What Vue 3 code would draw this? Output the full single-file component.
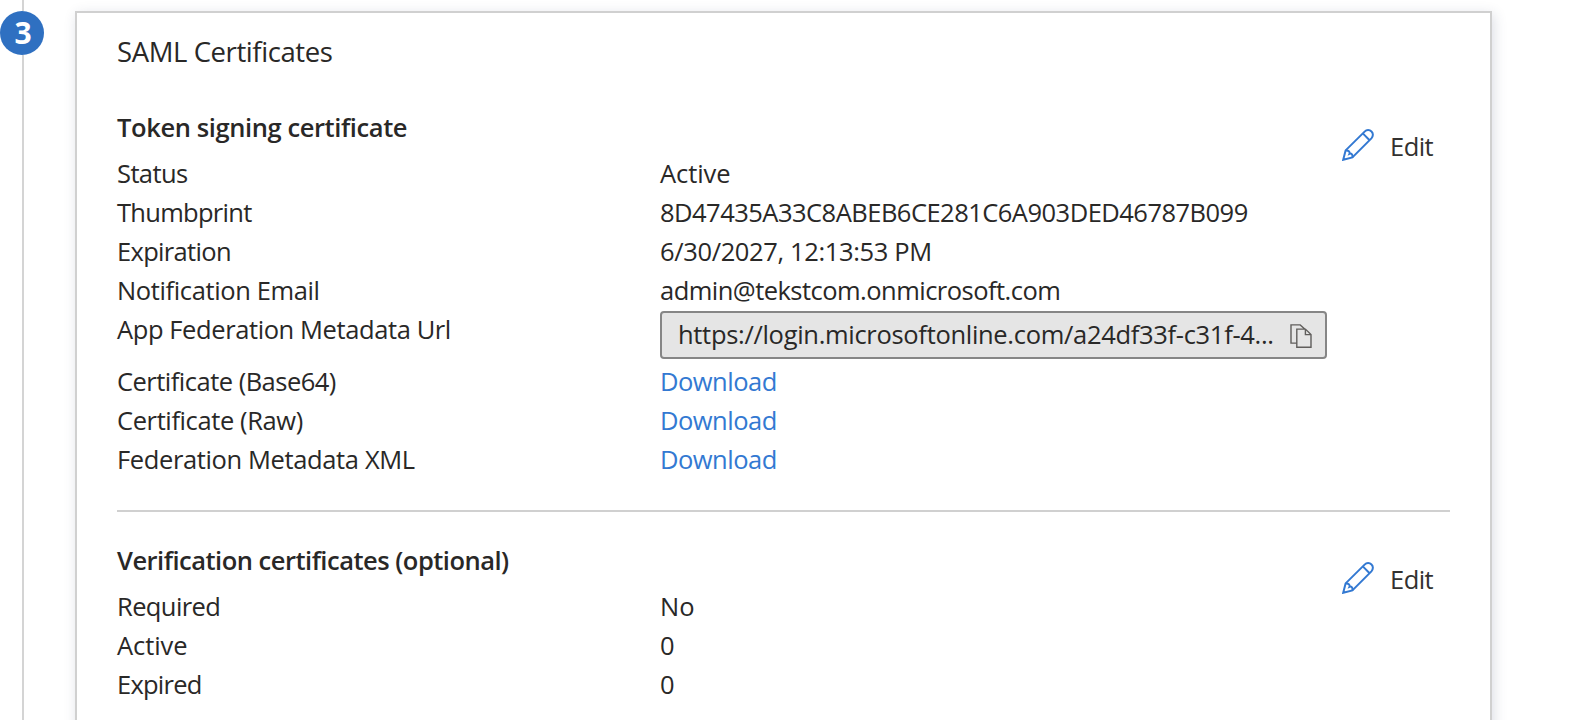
<script setup>
const signing = [
  { label: 'Status', l: 'k-status', value: 'Active', v: 'k-active' },
  { label: 'Thumbprint', l: 'k-thumb', value: '8D47435A33C8ABEB6CE281C6A903DED46787B099', v: 'k-hash' },
  { label: 'Expiration', l: 'k-expiration', value: '6/30/2027, 12:13:53 PM', v: 'k-date' },
  { label: 'Notification Email', l: 'k-email', value: 'admin@tekstcom.onmicrosoft.com', v: 'k-address' },
  { label: 'App Federation Metadata Url', l: 'k-url', value: 'https://login.microsoftonline.com/a24df33f-c31f-4...', field: true },
  { label: 'Certificate (Base64)', l: 'k-base64', value: 'Download', v: 'k-download', link: true },
  { label: 'Certificate (Raw)', l: 'k-raw', value: 'Download', v: 'k-download', link: true },
  { label: 'Federation Metadata XML', l: 'k-xml', value: 'Download', v: 'k-download', link: true },
]
const verification = [
  { label: 'Required', l: 'k-required', value: 'No', v: '' },
  { label: 'Active', l: 'k-active', value: '0', v: '' },
  { label: 'Expired', l: 'k-expired', value: '0', v: '' },
]
const sections = [
  { title: 'Token signing certificate', t: 'k-token', rows: signing },
  { title: 'Verification certificates (optional)', t: 'k-verification', rows: verification },
]
</script>

<template>
  <div class="page">
    <aside class="rail">
      <div class="line top"></div>
      <div class="step">3</div>
      <div class="line rest"></div>
    </aside>
    <main class="card">
      <h1>SAML Certificates</h1>
      <section v-for="s in sections" :key="s.title">
        <h2 :class="s.t">{{ s.title }}</h2>
        <button class="edit">
          <svg width="32" height="32" viewBox="0 0 32 32" fill="none" stroke="#3379d2" stroke-width="2">
            <path d="M1.2 30.8 3.6 21.4 22.6 2.6C24.6.6 27.6.6 29.5 2.4S31.3 7.4 29.4 9.4L10.4 28.4Z" />
            <path d="M20.8 4.4 27.6 11.2M3.7 21.6C6.3 21 8.3 23 7.5 24.8 9.3 24 11.3 26 10.3 28.4" />
          </svg>
          <span>Edit</span>
        </button>
        <dl>
          <div v-for="r in s.rows" :key="r.label" class="row" :class="{ tall: r.field }">
            <dt :class="r.l">{{ r.label }}</dt>
            <dd v-if="r.field" class="field">
              <span>{{ r.value }}</span>
              <svg width="22" height="25" viewBox="0 0 22 25" fill="none" stroke="#605e5c" stroke-width="1.4">
                <path d="M6.8 19.1H1V.9H10.2L15 5.2M6.8 5.1H15.4L21 10.6V23.2H6.8ZM15.4 5.1V10.6H21" />
              </svg>
            </dd>
            <dd v-else :class="r.v"><a v-if="r.link">{{ r.value }}</a><template v-else>{{ r.value }}</template></dd>
          </div>
        </dl>
      </section>
    </main>
  </div>
</template>

<style>
body { margin: 0; background: #fff; overflow: hidden; }
</style>

<style scoped>
.page {
  display: flex;
  width: 1582px;
  height: 720px;
  overflow: hidden;
  font: 25.5px/39px "Open Sans", "Noto Sans", sans-serif;
  color: #292827;
}
.rail { width: 44px; margin-right: 31px; display: flex; flex-direction: column; align-items: center; }
.line { width: 2px; background: #d4d4d4; margin-right: -2px; }
.top { height: 11px; }
.rest { flex: 1; }
.step {
  width: 44px;
  height: 44px;
  border-radius: 50%;
  background: #2f70c1;
  color: #fff;
  font-size: 30px;
  line-height: 43px;
  font-weight: 700;
  text-align: center;
  text-indent: 2px;
}
.card {
  box-sizing: border-box;
  width: 1417px;
  height: 800px;
  margin-top: 11px;
  border: 2px solid #d0d0d0;
  padding: 0 40px;
  box-shadow: 2px 3px 12px rgba(50, 60, 100, 0.17);
}
h1 { margin: 19px 0 0; font-size: 27.5px; line-height: 40px; font-weight: 400; letter-spacing: -0.41px; }
section { position: relative; height: 402px; margin-top: 36px; }
section + section { margin-top: 0; border-top: 2px solid #d0d0d0; padding-top: 29px; }
h2 { margin: 0 0 7px; font-size: 25.5px; line-height: 39px; font-weight: 600; }
dl, dd { margin: 0; }
.row { display: flex; height: 39px; }
.row.tall { height: 52px; }
dt { width: 543px; flex: none; white-space: nowrap; }
a { color: #3379d2; }
.field {
  box-sizing: border-box;
  width: 667px;
  height: 48px;
  margin-top: 1px;
  border: 2px solid #868686;
  border-radius: 4px;
  background: #e5e5e5;
  display: flex;
  align-items: center;
  justify-content: space-between;
  padding: 0 13px 0 16px;
  line-height: 44px;
  letter-spacing: -0.31px;
  white-space: nowrap;
}
.field span { margin-top: -2px; }
.field svg { margin-top: 2px; }
.edit {
  position: absolute;
  right: 17px;
  top: 19px;
  display: flex;
  align-items: center;
  gap: 16px;
  height: 39px;
  padding: 0;
  border: 0;
  background: none;
  font: inherit;
  color: #323130;
  letter-spacing: -0.6px;
}
section + section .edit { top: 48px; }
.edit svg { margin-top: -4px; }

.k-token { letter-spacing: -0.4px; }
.k-verification { letter-spacing: -0.5px; }
.k-status { letter-spacing: -0.6px; }
.k-active { letter-spacing: -0.08px; }
.k-thumb { letter-spacing: -0.72px; }
.k-hash { letter-spacing: -0.52px; }
.k-expiration { letter-spacing: -0.68px; }
.k-date { letter-spacing: -0.36px; }
.k-email { letter-spacing: -0.38px; }
.k-address { letter-spacing: -0.53px; }
.k-url { letter-spacing: -0.4px; }
.k-base64 { letter-spacing: -0.51px; }
.k-raw { letter-spacing: -0.39px; }
.k-xml { letter-spacing: -0.37px; }
.k-download { letter-spacing: -0.5px; }
.k-required { letter-spacing: -0.6px; }
.k-expired { letter-spacing: -0.75px; }
</style>
